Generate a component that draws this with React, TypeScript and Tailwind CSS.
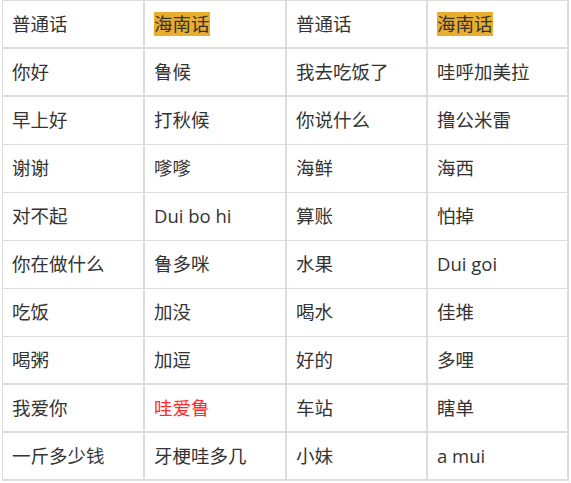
import React from "react";

type Cell = { text: string; mark?: boolean; red?: boolean };

const rows: Cell[][] = [
  [{ text: "普通话" }, { text: "海南话", mark: true }, { text: "普通话" }, { text: "海南话", mark: true }],
  [{ text: "你好" }, { text: "鲁候" }, { text: "我去吃饭了" }, { text: "哇呼加美拉" }],
  [{ text: "早上好" }, { text: "打秋候" }, { text: "你说什么" }, { text: "撸公米雷" }],
  [{ text: "谢谢" }, { text: "嗲嗲" }, { text: "海鲜" }, { text: "海西" }],
  [{ text: "对不起" }, { text: "Dui bo hi" }, { text: "算账" }, { text: "怕掉" }],
  [{ text: "你在做什么" }, { text: "鲁多咪" }, { text: "水果" }, { text: "Dui goi" }],
  [{ text: "吃饭" }, { text: "加没" }, { text: "喝水" }, { text: "佳堆" }],
  [{ text: "喝粥" }, { text: "加逗" }, { text: "好的" }, { text: "多哩" }],
  [{ text: "我爱你" }, { text: "哇爱鲁", red: true }, { text: "车站" }, { text: "瞎单" }],
  [{ text: "一斤多少钱" }, { text: "牙梗哇多几" }, { text: "小妹" }, { text: "a mui" }],
];

const thick = [0, 1, 7, 8, 9];

export default function App() {
  return (
    <div
      className="w-[571px] h-[483px] bg-white pl-[2px] text-[#333333] text-[18.5px]"
      style={{ fontFamily: '"Open Sans", "Noto Sans CJK SC", sans-serif' }}
    >
      <div className="w-[567px] border-l border-t border-[#dddddd]">
        {rows.map((row, ri) => (
          <div
            key={ri}
            className={
              thick.includes(ri)
                ? "grid grid-cols-[142px_142px_141px_141px] h-[48px] border-b-2 border-[#dddddd]"
                : "grid grid-cols-[142px_142px_141px_141px] h-[48px] border-b border-[#dddddd]"
            }
          >
            {row.map((c, ci) => (
              <div
                key={ci}
                className="flex items-center pl-[9px] border-r-2 border-[#dddddd] leading-none whitespace-nowrap"
              >
                {c.mark ? (
                  <span className="bg-[#e9ae2e] h-[24px] flex items-center">{c.text}</span>
                ) : c.red ? (
                  <span className="text-[#ff2a2a]">{c.text}</span>
                ) : (
                  <span>{c.text}</span>
                )}
              </div>
            ))}
          </div>
        ))}
      </div>
    </div>
  );
}
